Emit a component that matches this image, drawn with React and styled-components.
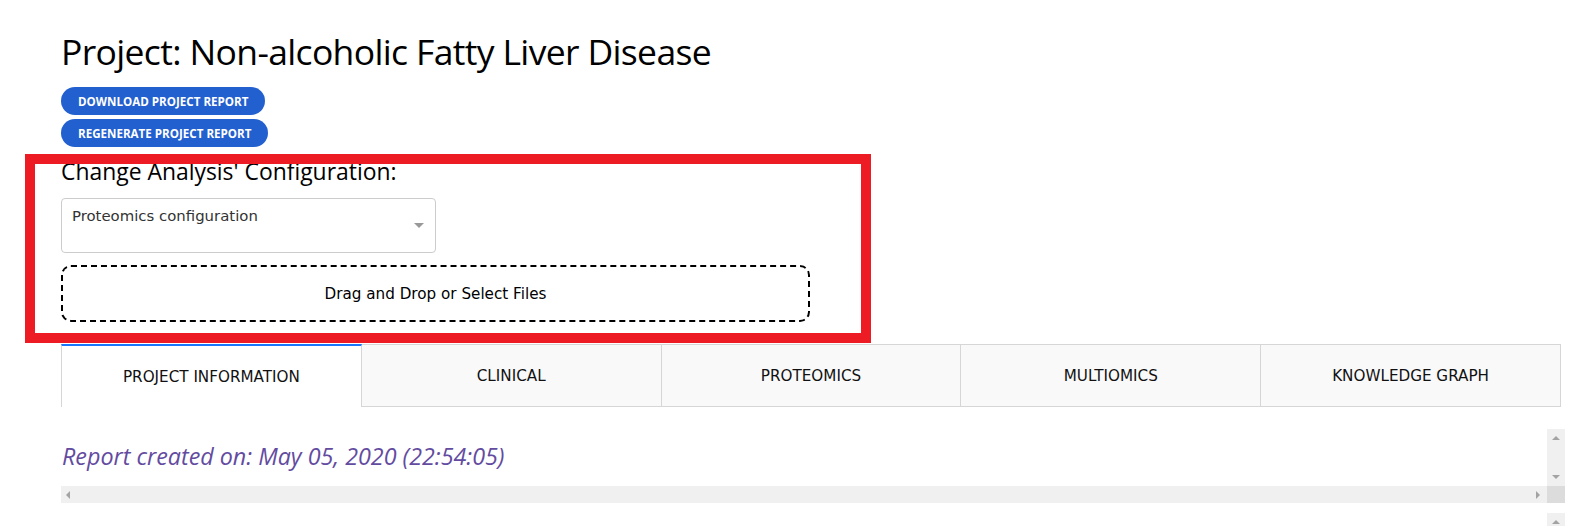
import React from 'react'
import styled, { createGlobalStyle } from 'styled-components'

const GlobalStyle = createGlobalStyle`
  body {
    margin: 0;
    background: #fff;
    color: #000;
    font-family: "Open Sans", "Noto Sans", sans-serif;
  }
`

const tabs = ['Project information', 'Clinical', 'Proteomics', 'Multiomics', 'Knowledge graph']

const Page = styled.div`
  position: relative;
  padding: 29px 19px 0 61px;
`

const Title = styled.h1`
  margin: 0;
  font-size: 35.5px;
  font-weight: 400;
  line-height: 44px;
  letter-spacing: -0.65px;
`

const ButtonStack = styled.div`
  display: flex;
  flex-direction: column;
  align-items: flex-start;
  gap: 4px;
  margin-top: 14px;
`

const PillButton = styled.button`
  height: 28px;
  padding: 0 17px;
  border: none;
  border-radius: 14px;
  background: #2360cf;
  color: #fff;
  font-family: "Open Sans", sans-serif;
  font-size: 11.6px;
  font-weight: 700;
  text-transform: uppercase;
  cursor: pointer;
`

const SectionTitle = styled.h3`
  margin: 11px 0 0;
  font-size: 22.9px;
  font-weight: 400;
  line-height: 28px;
`

const Select = styled.div`
  position: relative;
  box-sizing: border-box;
  width: 375px;
  height: 55px;
  margin-top: 12px;
  padding: 7px 10px;
  border: 1px solid #ccc;
  border-radius: 4px;
  font-family: "DejaVu Sans", Verdana, sans-serif;
  font-size: 14.9px;
  line-height: 20px;
  color: #333;

  &::after {
    content: '';
    position: absolute;
    right: 11px;
    top: 24px;
    border-left: 5px solid transparent;
    border-right: 5px solid transparent;
    border-top: 5px solid #999;
  }
`

const DropZone = styled.div`
  box-sizing: border-box;
  width: 749px;
  height: 57px;
  margin-top: 12px;
  display: flex;
  align-items: center;
  justify-content: center;
  border: 2px dashed #000;
  border-radius: 10px;
  font-family: "DejaVu Sans", Verdana, sans-serif;
  font-size: 15.2px;
`

const TabBar = styled.div`
  display: flex;
  width: 1500px;
  margin-top: 22px;
`

const Tab = styled.div`
  flex: 1;
  box-sizing: border-box;
  height: 63px;
  display: flex;
  align-items: center;
  justify-content: center;
  border: 1px solid #d6d6d6;
  border-left: ${(p) => (p.first ? '1px solid #d6d6d6' : 'none')};
  border-top: ${(p) => (p.active ? '2px solid #1975fa' : '1px solid #d6d6d6')};
  border-bottom: ${(p) => (p.active ? 'none' : '1px solid #d6d6d6')};
  background: ${(p) => (p.active ? '#fff' : '#f9f9f9')};
  font-family: "DejaVu Sans", Verdana, sans-serif;
  font-size: 15.2px;
  text-transform: uppercase;
  color: #111;
`

const Frame = styled.div`
  display: grid;
  grid-template-columns: 1fr 18px;
  grid-template-rows: ${(p) => p.rows};
  margin-top: ${(p) => p.gap};
  overflow: hidden;
`

const FrameBody = styled.div`
  padding: 12px 0 0 1px;
`

const Stamp = styled.p`
  margin: 0;
  font-size: 23.3px;
  font-style: italic;
  line-height: 30px;
  color: #634ba0;
`

const VBar = styled.div`
  background: #f0f0f0;
  display: flex;
  flex-direction: column;
  justify-content: space-between;
  align-items: center;
  padding: 7px 0;
`

const HBar = styled.div`
  background: #f0f0f0;
  display: flex;
  justify-content: space-between;
  align-items: center;
  padding: 0 7px 0 5px;
`

const Corner = styled.div`
  background: #dcdcdc;
`

const Arrow = styled.span`
  width: 0;
  height: 0;
  border: 4px solid transparent;
  ${(p) => p.dir === 'up' && 'border-bottom-color: #a3a3a3; border-top-width: 0;'}
  ${(p) => p.dir === 'down' && 'border-top-color: #a3a3a3; border-bottom-width: 0;'}
  ${(p) => p.dir === 'left' && 'border-right-color: #a3a3a3; border-left-width: 0;'}
  ${(p) => p.dir === 'right' && 'border-left-color: #a3a3a3; border-right-width: 0;'}
`

const Highlight = styled.div`
  position: absolute;
  left: 25px;
  top: 154px;
  width: 846px;
  height: 189px;
  box-sizing: border-box;
  border: 10px solid #ed1c24;
  pointer-events: none;
`

const App = () => {
  return (
    <Page>
      <GlobalStyle />
      <Title>Project: Non-alcoholic Fatty Liver Disease</Title>
      <ButtonStack>
        <PillButton>Download Project Report</PillButton>
        <PillButton>Regenerate Project Report</PillButton>
      </ButtonStack>

      <SectionTitle>Change Analysis' Configuration:</SectionTitle>
      <Select>Proteomics configuration</Select>
      <DropZone>Drag and Drop or Select Files</DropZone>

      <TabBar>
        {tabs.map((t, i) => (
          <Tab key={t} first={i === 0} active={i === 0}>{t}</Tab>
        ))}
      </TabBar>

      <Frame rows="57px 17px" gap="22px">
        <FrameBody>
          <Stamp>Report created on: May 05, 2020 (22:54:05)</Stamp>
        </FrameBody>
        <VBar>
          <Arrow dir="up" />
          <Arrow dir="down" />
        </VBar>
        <HBar>
          <Arrow dir="left" />
          <Arrow dir="right" />
        </HBar>
        <Corner />
      </Frame>

      <Frame rows="60px" gap="10px">
        <FrameBody />
        <VBar>
          <Arrow dir="up" />
        </VBar>
      </Frame>

      <Highlight />
    </Page>
  )
}

export default App
